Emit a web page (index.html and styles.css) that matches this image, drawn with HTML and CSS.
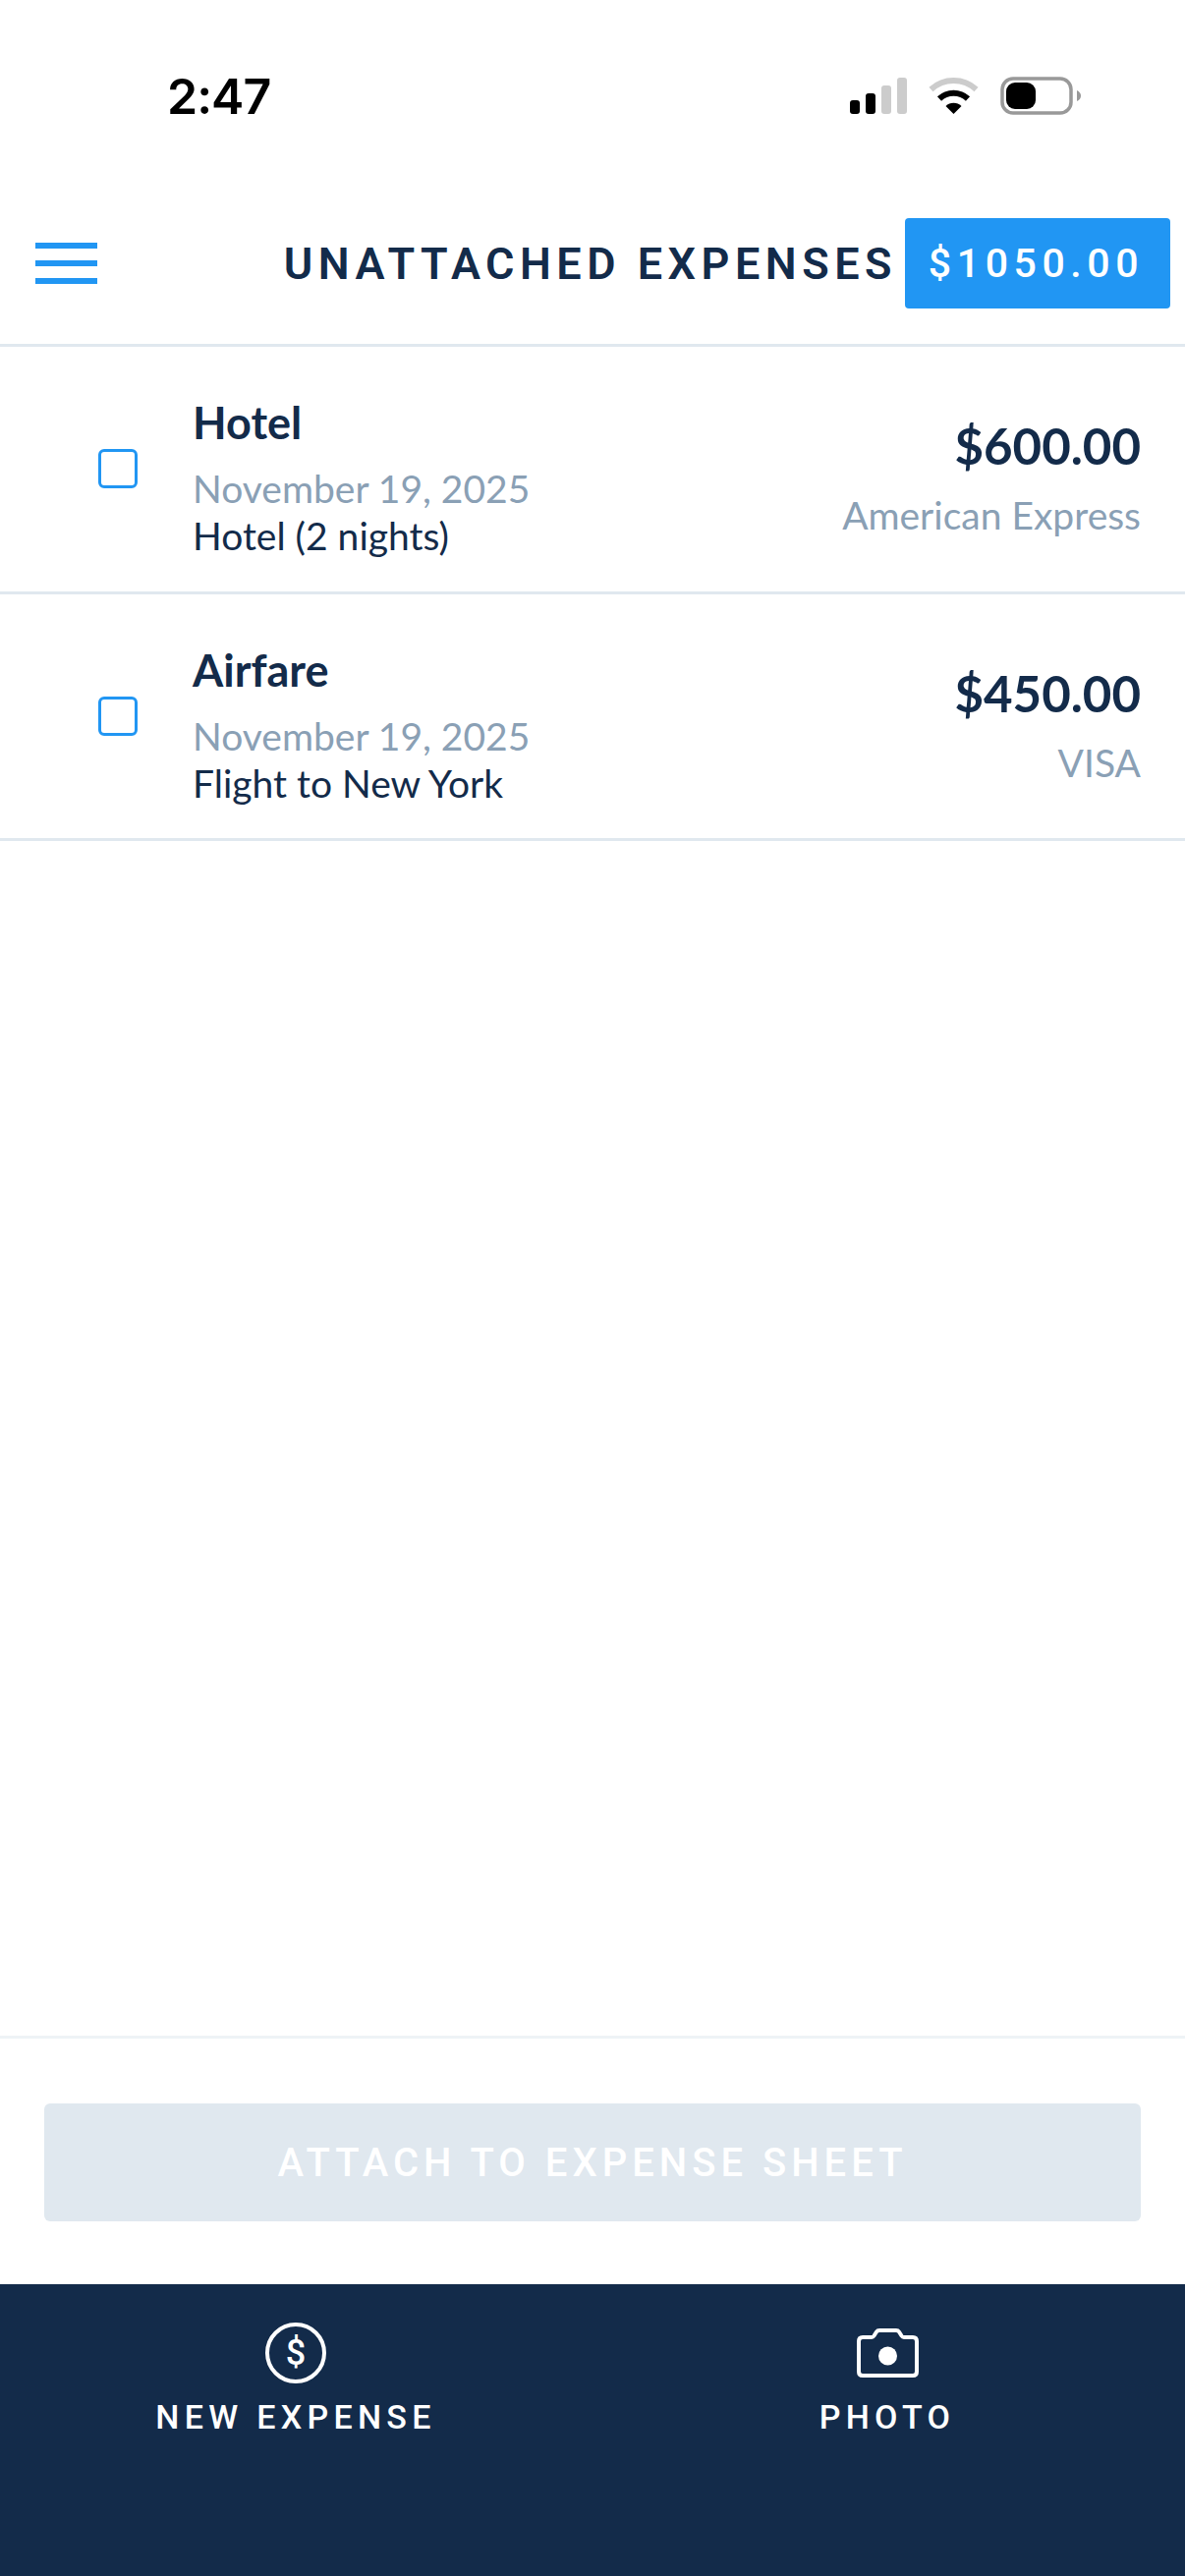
FILE: index.html
```html
<!DOCTYPE html>
<html lang="en">
<head>
    <meta charset="UTF-8">
    <meta name="viewport" content="width=device-width, initial-scale=1.0">
    <title>Unattached Expenses</title>
    <link rel="stylesheet" href="styles.css">
</head>
<body>
    <div class="app">
        <div class="status-bar">
            <span class="time">2:47</span>
            <svg class="status-icons" width="236" height="40" viewBox="0 0 236 40">
                <rect x="0" y="24" width="10" height="14" rx="3" fill="#000"/>
                <rect x="16" y="17" width="10" height="21" rx="3" fill="#000"/>
                <rect x="32" y="9" width="10" height="29" rx="3" fill="#ccc"/>
                <rect x="48" y="1" width="10" height="37" rx="3" fill="#ccc"/>
                <path d="M82.5 13 A34 34 0 0 1 128.5 13" fill="none" stroke="#ccc" stroke-width="6"/>
                <path d="M91 22.5 A21 21 0 0 1 120 22.5" fill="none" stroke="#000" stroke-width="6"/>
                <path d="M105.5 38 L97.5 30 A11.5 11.5 0 0 1 113.5 30 Z" fill="#000"/>
                <rect x="155" y="2" width="70" height="35" rx="11" fill="none" stroke="#999" stroke-width="3.5"/>
                <rect x="159" y="6" width="30" height="27" rx="9" fill="#000"/>
                <path d="M231 14 Q235 16 235 19.500 Q235 23 231 25 Z" fill="#999"/>
            </svg>
        </div>

        <header class="header">
            <div class="menu-icon">
                <span></span>
                <span></span>
                <span></span>
            </div>
            <h1 class="title">UNATTACHED EXPENSES</h1>
            <div class="total">$1050.00</div>
        </header>

        <div class="expense">
            <div class="checkbox"></div>
            <div class="info">
                <div class="name">Hotel</div>
                <div class="date">November 19, 2025</div>
                <div class="desc">Hotel (2 nights)</div>
            </div>
            <div class="cost">
                <div class="amount">$600.00</div>
                <div class="card">American Express</div>
            </div>
        </div>
        <div class="expense">
            <div class="checkbox"></div>
            <div class="info">
                <div class="name">Airfare</div>
                <div class="date">November 19, 2025</div>
                <div class="desc">Flight to New York</div>
            </div>
            <div class="cost">
                <div class="amount">$450.00</div>
                <div class="card">VISA</div>
            </div>
        </div>

        <div class="spacer"></div>

        <div class="attach-area">
            <div class="attach-btn">ATTACH TO EXPENSE SHEET</div>
        </div>

        <nav class="tabbar">
            <div class="tab">
                <div class="tab-icon"><span class="dollar">$</span></div>
                <span class="tab-label">NEW EXPENSE</span>
            </div>
            <div class="tab">
                <div class="tab-icon">
                    <svg width="63" height="50" viewBox="0 0 63 50">
                        <path d="M6 9 H15 Q16.500 9 17.500 7.500 L20 3.500 Q21 2 23 2 H40 Q42 2 43 3.500 L45.500 7.500 Q46.500 9 48 9 H57 Q61 9 61 13 V44 Q61 48 57 48 H6 Q2 48 2 44 V13 Q2 9 6 9 Z" fill="none" stroke="#fff" stroke-width="4"/>
                        <circle cx="31.500" cy="28" r="9.500" fill="#fff"/>
                    </svg>
                </div>
                <span class="tab-label">PHOTO</span>
            </div>
        </nav>
    </div>
</body>
</html>
```

FILE: styles.css
```css
body {
    margin: 0;
    padding: 0;
    background-color: #fff;
    font-family: "Lato", sans-serif;
    color: #132b4a;
}
.app {
    display: flex;
    flex-direction: column;
    width: 1206px;
    height: 2622px;
    overflow: hidden;
}
.status-bar {
    display: flex;
    justify-content: space-between;
    align-items: flex-start;
    height: 186px;
    padding: 78px 105px 0 170px;
    box-sizing: border-box;
}
.time {
    font-family: "Inter", sans-serif;
    font-size: 50px;
    font-weight: 600;
    line-height: 40px;
    letter-spacing: -1px;
    color: #000;
}
.header {
    display: flex;
    align-items: center;
    height: 167px;
    padding: 0 15px 0 36px;
    box-sizing: border-box;
    border-bottom: 3px solid #e0e8ef;
}
.menu-icon {
    display: flex;
    flex-direction: column;
    gap: 12px;
    width: 63px;
}
.menu-icon span {
    height: 6px;
    background-color: #2196f3;
}
.title {
    margin: 0 8px 0 auto;
    font-family: "Roboto", sans-serif;
    font-size: 45px;
    font-weight: 600;
    letter-spacing: 5.5px;
    color: #132b4a;
}
.total {
    display: flex;
    align-items: center;
    justify-content: center;
    width: 270px;
    height: 92px;
    padding-right: 3px;
    box-sizing: border-box;
    background-color: #2196f3;
    border-radius: 4px;
    font-family: "Roboto", sans-serif;
    font-size: 41px;
    font-weight: 500;
    letter-spacing: 5.6px;
    color: #fff;
}
.expense {
    display: flex;
    align-items: center;
    height: 251.5px;
    padding: 0 45px 0 100px;
    box-sizing: border-box;
    border-bottom: 3px solid #e0e8ef;
}
.checkbox {
    width: 40px;
    height: 40px;
    box-sizing: border-box;
    border: 3px solid #2196f3;
    border-radius: 6px;
}
.info {
    flex: 1;
    margin-left: 56px;
    padding-top: 15px;
}
.name {
    font-size: 45px;
    font-weight: 700;
    line-height: 60px;
    margin-bottom: 13px;
}
.date {
    font-size: 39px;
    line-height: 48px;
    color: #8aa0b5;
}
.desc {
    font-size: 39px;
    line-height: 48px;
}
.cost {
    padding-top: 18px;
    text-align: right;
}
.amount {
    font-size: 51px;
    font-weight: 700;
    line-height: 60px;
    margin-bottom: 16px;
}
.card {
    font-size: 39px;
    line-height: 48px;
    color: #8aa0b5;
}
.spacer {
    flex: 1;
}
.attach-area {
    height: 253px;
    padding: 66px 45px 0;
    box-sizing: border-box;
    border-top: 3px solid #eef3f6;
}
.attach-btn {
    display: flex;
    align-items: center;
    justify-content: center;
    height: 120px;
    background-color: #e0e8ef;
    border-radius: 6px;
    font-family: "Roboto", sans-serif;
    font-size: 40px;
    font-weight: 500;
    letter-spacing: 5px;
    color: #fff;
}
.tabbar {
    display: flex;
    height: 297px;
    padding-right: 2px;
    background-color: #132b4a;
}
.tab {
    flex: 1;
    display: flex;
    flex-direction: column;
    align-items: center;
    padding-top: 39px;
    color: #fff;
}
.tab-icon {
    display: flex;
    align-items: center;
    justify-content: center;
    height: 62px;
    margin-bottom: 14px;
}
.dollar {
    display: flex;
    align-items: center;
    justify-content: center;
    width: 62px;
    height: 62px;
    box-sizing: border-box;
    border: 4px solid #fff;
    border-radius: 50%;
    font-family: "Roboto", sans-serif;
    font-size: 36px;
    font-weight: 500;
}
.tab-label {
    font-family: "Roboto", sans-serif;
    font-size: 34px;
    font-weight: 500;
    line-height: 40px;
    letter-spacing: 5.3px;
}
```
